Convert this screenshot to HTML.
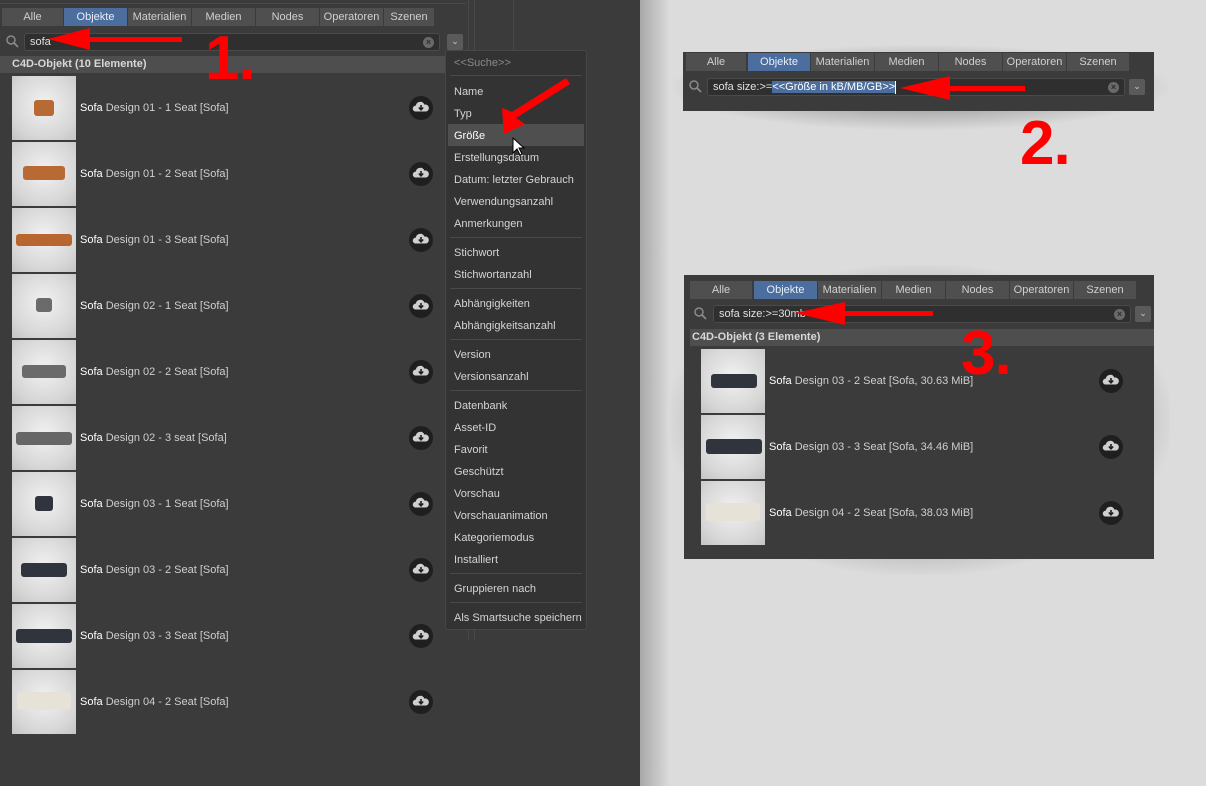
<!DOCTYPE html>
<html><head><meta charset="utf-8">
<style>
*{margin:0;padding:0;box-sizing:border-box}
body{width:1206px;height:786px;overflow:hidden;background:#dcdcdc;font-family:"Liberation Sans",sans-serif;font-size:11px;color:#cfcfcf;position:relative}
.a{position:absolute}
.panel{background:#3b3b3b}
.tab{position:absolute;height:18px;background:#4f4f4f;color:#d0d0d0;text-align:center;line-height:18px;font-size:11px}
.tab.on{background:#4b6e9e;color:#e8eef8}
.field{position:absolute;height:18px;background:#2f2f2f;border:1px solid #4a4a4a;border-radius:3px;line-height:16px;padding-left:5px;color:#e0e0e0}
.clr{position:absolute;right:5px;top:3px;width:11px;height:11px;border-radius:50%;background:#6a6a6a;color:#2f2f2f;font-size:9px;line-height:11px;text-align:center;font-weight:bold}
.dd{position:absolute;width:16px;height:16px;background:#5a5a5a;border-radius:2px;color:#ccc;font-size:9px;text-align:center;line-height:14px}
.hdr{position:absolute;height:17px;background:#4e4e4e;color:#d8d8d8;font-weight:bold;line-height:17px;padding-left:12px}
.th{position:absolute;width:64px;height:64px;background:radial-gradient(circle at 50% 45%,#f2f2f2 0%,#d6d6d6 70%,#c4c4c4 100%)}
.th i{position:absolute;display:block;border-radius:3px}
.lbl{position:absolute;color:#cfcfcf;line-height:14px}
.lbl b{color:#fff;font-weight:normal}
.menu{position:absolute;left:445px;top:50px;width:142px;height:580px;background:#333;border:1px solid #474747;border-radius:3px}
.mi{position:absolute;left:8px;color:#d4d4d4;line-height:14px}
.sep{position:absolute;left:4px;right:4px;height:1px;background:#4a4a4a}
.big{position:absolute;color:#ff0000;font-weight:bold;font-size:62px;line-height:1;letter-spacing:-1px}
</style></head><body>

<div class="a panel" style="left:0;top:0;width:640px;height:786px"></div>
<div class="a" style="left:0;top:3px;width:466px;height:1px;background:#4a4a4a"></div>
<div class="a" style="left:468px;top:0;width:1px;height:640px;background:#484848"></div>
<div class="a" style="left:474px;top:0;width:1px;height:640px;background:#484848"></div>
<div class="a" style="left:513px;top:0;width:1px;height:50px;background:#484848"></div>

<div class="tab" style="left:2px;top:8px;width:61px">Alle</div>
<div class="tab on" style="left:64px;top:8px;width:63px">Objekte</div>
<div class="tab" style="left:128px;top:8px;width:63px">Materialien</div>
<div class="tab" style="left:192px;top:8px;width:63px">Medien</div>
<div class="tab" style="left:256px;top:8px;width:63px">Nodes</div>
<div class="tab" style="left:320px;top:8px;width:63px">Operatoren</div>
<div class="tab" style="left:384px;top:8px;width:50px">Szenen</div>

<svg class="a" style="left:5px;top:34px" width="14" height="14"><circle cx="6" cy="6" r="4" fill="none" stroke="#8a8a8a" stroke-width="1.5"/><line x1="9" y1="9" x2="13" y2="13" stroke="#8a8a8a" stroke-width="1.8"/></svg>
<div class="field" style="left:24px;top:33px;width:416px">sofa<span class="clr">×</span></div>
<div class="dd" style="left:447px;top:34px">⌄</div>

<div class="hdr" style="left:0;top:56px;width:466px">C4D-Objekt (10 Elemente)</div>

<div class="th" style="left:12px;top:76px"><i style="left:22px;top:24px;width:20px;height:16px;background:#b86a35"></i></div>
<div class="lbl" style="left:80px;top:101px"><b>Sofa</b> Design 01 - 1 Seat [Sofa]</div>
<div class="th" style="left:12px;top:142px"><i style="left:11px;top:24px;width:42px;height:14px;background:#b96a34"></i></div>
<div class="lbl" style="left:80px;top:167px"><b>Sofa</b> Design 01 - 2 Seat [Sofa]</div>
<div class="th" style="left:12px;top:208px"><i style="left:4px;top:26px;width:56px;height:12px;background:#b8662f"></i></div>
<div class="lbl" style="left:80px;top:233px"><b>Sofa</b> Design 01 - 3 Seat [Sofa]</div>
<div class="th" style="left:12px;top:274px"><i style="left:24px;top:24px;width:16px;height:14px;background:#6b6b6b"></i></div>
<div class="lbl" style="left:80px;top:299px"><b>Sofa</b> Design 02 - 1 Seat [Sofa]</div>
<div class="th" style="left:12px;top:340px"><i style="left:10px;top:25px;width:44px;height:13px;background:#6a6a6a"></i></div>
<div class="lbl" style="left:80px;top:365px"><b>Sofa</b> Design 02 - 2 Seat [Sofa]</div>
<div class="th" style="left:12px;top:406px"><i style="left:4px;top:26px;width:56px;height:13px;background:#666"></i></div>
<div class="lbl" style="left:80px;top:431px"><b>Sofa</b> Design 02 - 3 seat [Sofa]</div>
<div class="th" style="left:12px;top:472px"><i style="left:23px;top:24px;width:18px;height:15px;background:#30343c"></i></div>
<div class="lbl" style="left:80px;top:497px"><b>Sofa</b> Design 03 - 1 Seat [Sofa]</div>
<div class="th" style="left:12px;top:538px"><i style="left:9px;top:25px;width:46px;height:14px;background:#30343c"></i></div>
<div class="lbl" style="left:80px;top:563px"><b>Sofa</b> Design 03 - 2 Seat [Sofa]</div>
<div class="th" style="left:12px;top:604px"><i style="left:4px;top:25px;width:56px;height:14px;background:#30343c"></i></div>
<div class="lbl" style="left:80px;top:629px"><b>Sofa</b> Design 03 - 3 Seat [Sofa]</div>
<div class="th" style="left:12px;top:670px"><i style="left:5px;top:22px;width:54px;height:18px;background:#e6e2d8"></i></div>
<div class="lbl" style="left:80px;top:695px"><b>Sofa</b> Design 04 - 2 Seat [Sofa]</div>

<svg width="0" height="0" style="position:absolute"><defs><g id="dlc"><circle cx="12" cy="12" r="12" fill="#1f1f1f"/><path d="M6 15.5a3 3 0 0 1 .8-5.9 4.5 4.5 0 0 1 8.6-1 3.5 3.5 0 0 1 1.8 6.9z" fill="#cfcfcf"/><path d="M12 9v4.5M9.8 11.5l2.2 2.3 2.2-2.3" stroke="#1f1f1f" stroke-width="1.6" fill="none"/></g></defs></svg>
<svg class="a" style="left:409px;top:96px" width="24" height="24"><use href="#dlc"/></svg>
<svg class="a" style="left:409px;top:162px" width="24" height="24"><use href="#dlc"/></svg>
<svg class="a" style="left:409px;top:228px" width="24" height="24"><use href="#dlc"/></svg>
<svg class="a" style="left:409px;top:294px" width="24" height="24"><use href="#dlc"/></svg>
<svg class="a" style="left:409px;top:360px" width="24" height="24"><use href="#dlc"/></svg>
<svg class="a" style="left:409px;top:426px" width="24" height="24"><use href="#dlc"/></svg>
<svg class="a" style="left:409px;top:492px" width="24" height="24"><use href="#dlc"/></svg>
<svg class="a" style="left:409px;top:558px" width="24" height="24"><use href="#dlc"/></svg>
<svg class="a" style="left:409px;top:624px" width="24" height="24"><use href="#dlc"/></svg>
<svg class="a" style="left:409px;top:690px" width="24" height="24"><use href="#dlc"/></svg>

<div class="menu">
<div class="mi" style="top:5px;color:#8a8a8a">&lt;&lt;Suche&gt;&gt;</div>
<div class="sep" style="top:24px"></div>
<div class="mi" style="top:34px">Name</div>
<div class="mi" style="top:56px">Typ</div>
<div class="a" style="left:2px;top:73px;width:136px;height:22px;background:#4f4f4f"></div>
<div class="mi" style="top:78px;color:#fff">Größe</div>
<div class="mi" style="top:100px">Erstellungsdatum</div>
<div class="mi" style="top:122px">Datum: letzter Gebrauch</div>
<div class="mi" style="top:144px">Verwendungsanzahl</div>
<div class="mi" style="top:166px">Anmerkungen</div>
<div class="sep" style="top:186px"></div>
<div class="mi" style="top:195px">Stichwort</div>
<div class="mi" style="top:217px">Stichwortanzahl</div>
<div class="sep" style="top:237px"></div>
<div class="mi" style="top:246px">Abhängigkeiten</div>
<div class="mi" style="top:268px">Abhängigkeitsanzahl</div>
<div class="sep" style="top:288px"></div>
<div class="mi" style="top:297px">Version</div>
<div class="mi" style="top:319px">Versionsanzahl</div>
<div class="sep" style="top:339px"></div>
<div class="mi" style="top:348px">Datenbank</div>
<div class="mi" style="top:370px">Asset-ID</div>
<div class="mi" style="top:392px">Favorit</div>
<div class="mi" style="top:414px">Geschützt</div>
<div class="mi" style="top:436px">Vorschau</div>
<div class="mi" style="top:458px">Vorschauanimation</div>
<div class="mi" style="top:480px">Kategoriemodus</div>
<div class="mi" style="top:502px">Installiert</div>
<div class="sep" style="top:522px"></div>
<div class="mi" style="top:531px">Gruppieren nach</div>
<div class="sep" style="top:551px"></div>
<div class="mi" style="top:560px">Als Smartsuche speichern</div>
</div>
<svg class="a" style="left:512px;top:137px" width="14" height="20"><path d="M1 1v15l4-4 3 6 2-1-3-6h5z" fill="#fff" stroke="#000" stroke-width="1"/></svg>

<div class="a" style="left:640px;top:0;width:30px;height:786px;background:linear-gradient(90deg,#a8a8a8,#dcdcdc)"></div>

<div class="a" style="left:673px;top:45px;width:495px;height:85px;background:radial-gradient(ellipse at center,#b0b0b0 40%,rgba(220,220,220,0) 72%)"></div>
<div class="a panel" style="left:683px;top:52px;width:471px;height:59px"></div>
<div class="tab" style="left:686px;top:53px;width:60px">Alle</div>
<div class="tab on" style="left:748px;top:53px;width:62px">Objekte</div>
<div class="tab" style="left:811px;top:53px;width:63px">Materialien</div>
<div class="tab" style="left:875px;top:53px;width:63px">Medien</div>
<div class="tab" style="left:939px;top:53px;width:63px">Nodes</div>
<div class="tab" style="left:1003px;top:53px;width:63px">Operatoren</div>
<div class="tab" style="left:1067px;top:53px;width:62px">Szenen</div>
<svg class="a" style="left:688px;top:79px" width="14" height="14"><circle cx="6" cy="6" r="4" fill="none" stroke="#8a8a8a" stroke-width="1.5"/><line x1="9" y1="9" x2="13" y2="13" stroke="#8a8a8a" stroke-width="1.8"/></svg>
<div class="field" style="left:707px;top:78px;width:418px;height:18px">sofa size:&gt;=<span style="background:#4b6e9e;color:#fff">&lt;&lt;Größe in kB/MB/GB&gt;&gt;</span><span style="display:inline-block;width:1px;height:13px;background:#fff;vertical-align:middle"></span><span class="clr">×</span></div>
<div class="dd" style="left:1129px;top:79px">⌄</div>

<div class="a" style="left:670px;top:265px;width:500px;height:310px;background:radial-gradient(ellipse at center,#a8a8a8 50%,rgba(220,220,220,0) 72%)"></div>
<div class="a panel" style="left:684px;top:275px;width:470px;height:284px"></div>
<div class="tab" style="left:690px;top:281px;width:62px">Alle</div>
<div class="tab on" style="left:754px;top:281px;width:63px">Objekte</div>
<div class="tab" style="left:818px;top:281px;width:63px">Materialien</div>
<div class="tab" style="left:882px;top:281px;width:63px">Medien</div>
<div class="tab" style="left:946px;top:281px;width:63px">Nodes</div>
<div class="tab" style="left:1010px;top:281px;width:63px">Operatoren</div>
<div class="tab" style="left:1074px;top:281px;width:62px">Szenen</div>
<svg class="a" style="left:693px;top:306px" width="14" height="14"><circle cx="6" cy="6" r="4" fill="none" stroke="#8a8a8a" stroke-width="1.5"/><line x1="9" y1="9" x2="13" y2="13" stroke="#8a8a8a" stroke-width="1.8"/></svg>
<div class="field" style="left:713px;top:305px;width:418px">sofa size:&gt;=30mb<span class="clr">×</span></div>
<div class="dd" style="left:1135px;top:306px">⌄</div>
<div class="hdr" style="left:690px;top:329px;width:464px;padding-left:2px">C4D-Objekt (3 Elemente)</div>
<div class="th" style="left:701px;top:349px"><i style="left:10px;top:25px;width:46px;height:14px;background:#30343c"></i></div>
<div class="lbl" style="left:769px;top:374px"><b>Sofa</b> Design 03 - 2 Seat [Sofa, 30.63 MiB]</div>
<div class="th" style="left:701px;top:415px"><i style="left:5px;top:24px;width:56px;height:15px;background:#30343c"></i></div>
<div class="lbl" style="left:769px;top:440px"><b>Sofa</b> Design 03 - 3 Seat [Sofa, 34.46 MiB]</div>
<div class="th" style="left:701px;top:481px"><i style="left:5px;top:22px;width:54px;height:18px;background:#e6e2d8"></i></div>
<div class="lbl" style="left:769px;top:506px"><b>Sofa</b> Design 04 - 2 Seat [Sofa, 38.03 MiB]</div>
<svg class="a" style="left:1099px;top:369px" width="24" height="24"><use href="#dlc"/></svg>
<svg class="a" style="left:1099px;top:435px" width="24" height="24"><use href="#dlc"/></svg>
<svg class="a" style="left:1099px;top:501px" width="24" height="24"><use href="#dlc"/></svg>

<svg class="a" style="left:0;top:0" width="1206" height="786">
<g fill="#ff0000">
<rect x="80" y="37" width="102" height="5"/><polygon points="48,39 90,28 90,50"/>
<polygon points="504,134 502,108 512,112 566,78 570,84 516,118 525,124"/>
<rect x="930" y="86" width="95" height="5"/><polygon points="900,88 950,76 950,100"/>
<rect x="835" y="311" width="98" height="5"/><polygon points="795,313 845,302 845,325"/>
</g>
</svg>
<div class="big" style="left:205px;top:28px">1.</div>
<div class="big" style="left:1020px;top:113px">2.</div>
<div class="big" style="left:961px;top:323px">3.</div>

</body></html>
